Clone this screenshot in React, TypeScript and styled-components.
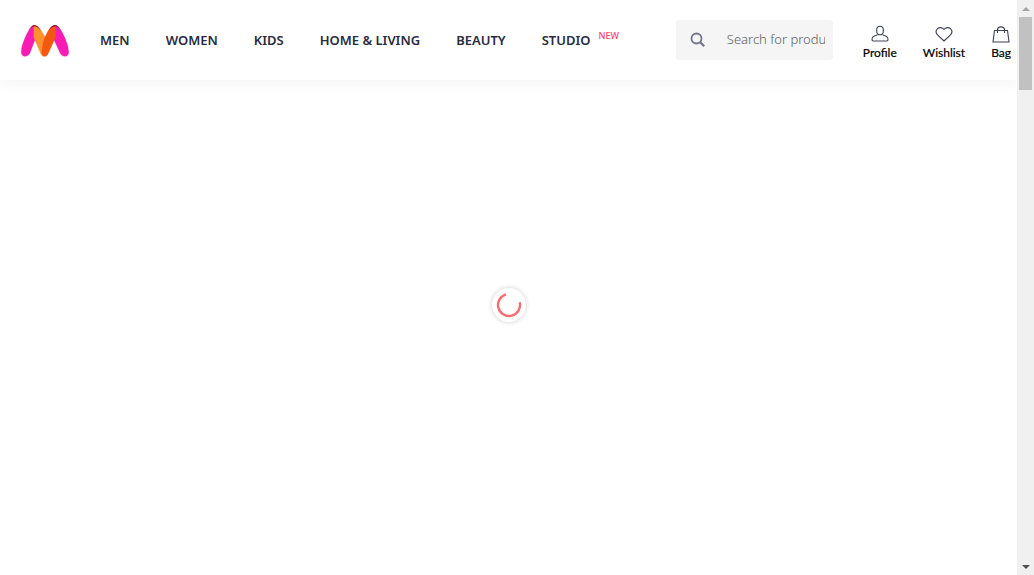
import React from "react";
import styled, { createGlobalStyle, keyframes } from "styled-components";

const GlobalStyle = createGlobalStyle`
  * { box-sizing: border-box; }
  body { margin: 0; background: #fff; color: #282c3f; font-family: "Noto Sans", "Liberation Sans", sans-serif; overflow: hidden; }
`;

const Window = styled.div`
  display: flex;
  height: 100vh;
`;

const Page = styled.div`
  flex: 1;
  min-width: 0;
  display: flex;
  flex-direction: column;
  overflow: hidden;
`;

const Header = styled.header`
  display: flex;
  align-items: center;
  height: 80px;
  flex: none;
  padding: 0 6px 0 20px;
  box-shadow: 0 4px 12px rgba(40, 44, 63, 0.05);
`;

const Logo = styled.a`
  display: block;
  width: 50px;
  height: 36px;
  flex: none;
`;

const Nav = styled.nav`
  display: flex;
  gap: 36px;
  margin-left: 30px;
`;

const NavLink = styled.a`
  color: #282c3f;
  font-size: 13px;
  line-height: 20px;
  font-weight: 600;
  text-decoration: none;
  white-space: nowrap;
`;

const NewTag = styled.sup`
  margin-left: 8px;
  color: #ff3f6c;
  font-size: 9px;
  line-height: 10px;
  font-weight: 500;
  vertical-align: 6px;
`;

const Search = styled.form`
  display: flex;
  align-items: center;
  width: 157px;
  height: 40px;
  margin-left: auto;
  padding: 0 8px 0 13px;
  background: #f5f5f6;
  border-radius: 4px;
`;

const SearchButton = styled.button`
  display: flex;
  flex: none;
  margin: 0 20px 0 0;
  padding: 0;
  border: 0;
  background: none;
`;

const SearchInput = styled.input`
  flex: 1;
  min-width: 0;
  padding: 0 0 2px;
  border: 0;
  outline: 0;
  background: none;
  color: #696e79;
  font-family: inherit;
  font-size: 13px;
  font-weight: 300;
  line-height: 20px;
  &::placeholder { color: #606060; opacity: 1; }
`;

const Actions = styled.div`
  display: flex;
  gap: 26px;
  margin-left: 30px;
`;

const Action = styled.a`
  display: flex;
  flex-direction: column;
  align-items: center;
  gap: 1px;
  padding-top: 7px;
  color: #000;
  font-family: Lato, sans-serif;
  font-size: 12px;
  line-height: 18px;
  text-decoration: none;
  -webkit-text-stroke: 0.2px;
`;

const Content = styled.main`
  flex: 1;
  display: flex;
  justify-content: center;
  padding-top: 208px;
`;

const spin = keyframes`
  to { transform: rotate(360deg); }
`;

const Loader = styled.div`
  display: flex;
  align-items: center;
  justify-content: center;
  width: 34px;
  height: 34px;
  border-radius: 50%;
  background: #fff;
  box-shadow: 0 0 5px rgba(0, 0, 0, 0.2);
  @media (prefers-reduced-motion: no-preference) {
    &:hover svg { animation: ${spin} 1s linear infinite; }
  }
`;

const Scrollbar = styled.div`
  display: flex;
  flex-direction: column;
  align-items: center;
  flex: none;
  width: 17px;
  background: #f0f0f0;
`;

const ScrollArrow = styled.div`
  display: flex;
  height: 17px;
  align-items: center;
`;

const Thumb = styled.div`
  width: 13px;
  height: 73px;
  background: #c1c1c1;
`;

const Track = styled.div`
  flex: 1;
`;

const sections = ["MEN", "WOMEN", "KIDS", "HOME & LIVING", "BEAUTY"];

function LogoMark() {
  return (
    <svg width="50" height="36" viewBox="0 0 50 36" role="img" aria-label="Home">
      <path
        d="M14.500 3C9 5 1 22 1 31c0 5 7 5 9 0l5-13 5.500 13c1.500 4.500 6.500 4.500 8 0L34 18l5 13c2 5 10 5 10 0C49 22 41 5 35 3c-4 0-7 6-10 12-3-6-6-12-10.500-12Z"
        fill="#eee" stroke="#eee" strokeWidth="1.500"
      />
      <path d="M14.500 3C9 4 1.200 22 1.200 30c0 6 7 5.500 9 .5L15 18V4Z" fill="#f81cb5" />
      <path d="M35 3c6 1 13.800 19 13.800 27 0 6-7 5.500-9 .5L34 18V4Z" fill="#f81cb5" />
      <path d="M13.700 3.200c4.500-.5 7.500 5 11.500 12L28 22l-4 12.500c-2-.5-3-2-4-4.500l-6.300-14.500Z" fill="#ff912e" />
      <path d="M35.500 3.200c-4.500-.5-7.500 5-11 12.800-1.200 3.300-2 8-3 15.500 1.500 4 5.500 4 7-.5l7-15.500Z" fill="#f4570e" />
      <path d="M8.500 8.500C11 4.500 12.500 3 14.500 3S19 5 21 9c-2.500-3.300-4.500-4.500-6.500-4.500S11 5.700 8.500 8.500ZM28.500 9C31 4.500 33 3 35 3s4 1.500 6 5.500c-2-2.800-4-4-6-4s-4 1.200-6.500 4.500Z" fill="#9c1544" />
    </svg>
  );
}

export default function App() {
  return (
    <>
      <GlobalStyle />
      <Window>
        <Page>
          <Header>
            <Logo href="#"><LogoMark /></Logo>
            <Nav>
              {sections.map((name) => <NavLink href="#" key={name}>{name}</NavLink>)}
              <NavLink href="#">STUDIO<NewTag>NEW</NewTag></NavLink>
            </Nav>
            <Search onSubmit={(e) => e.preventDefault()}>
              <SearchButton aria-label="Search">
                <svg width="18" height="18" viewBox="0 0 18 18" fill="none" stroke="#73758c" strokeWidth="1.800">
                  <circle cx="7.500" cy="7.500" r="5" />
                  <path d="m11.200 11.200 4 4" strokeWidth="2.200" />
                </svg>
              </SearchButton>
              <SearchInput aria-label="Search for products" placeholder="Search for products, brands and more" />
            </Search>
            <Actions>
              <Action href="#">
                <svg width="18" height="18" viewBox="0 0 18 18" fill="none" stroke="#3e4152" strokeWidth="1.100">
                  <path d="M9 1.200c-2.200 0-3.300 1.300-3.300 3.500v1.500C5.700 8.400 7 9.800 9 9.800s3.300-1.400 3.300-3.600V4.700c0-2.200-1.100-3.500-3.300-3.500ZM6.300 10C3 10.700 1 12 1 14.500c0 1 .3 1.500 1.300 1.500h13.400c1 0 1.300-.5 1.300-1.500 0-2.500-2-3.800-5.300-4.500" />
                </svg>
                Profile
              </Action>
              <Action href="#">
                <svg width="18" height="18" viewBox="0 0 18 18" fill="none" stroke="#3e4152" strokeWidth="1.100" strokeLinejoin="round">
                  <path d="M9 4.500C7.500 2.300 4.500 2 2.500 3.700c-1.900 2-1.600 4.500 0 6.200L9 16l6.500-6.100c1.600-1.700 1.900-4.200 0-6.200-2-1.700-5-1.400-6.500.8Z" />
                </svg>
                Wishlist
              </Action>
              <Action href="#">
                <svg width="18" height="18" viewBox="0 0 18 18" fill="none" stroke="#3e4152" strokeWidth="1.100">
                  <path d="M2.500 5.500h13L17 17H1ZM5.500 8V5C5.500 3 6.800 1.900 9 1.900S12.500 3 12.500 5v3" />
                </svg>
                Bag
              </Action>
            </Actions>
          </Header>
          <Content>
            <Loader role="status" aria-label="Loading">
              <svg width="26" height="26" viewBox="0 0 26 26" fill="none">
                <path d="M10 2.400A11 11 0 1 0 23.700 10.300" stroke="#f86c70" strokeWidth="2.400" />
              </svg>
            </Loader>
          </Content>
        </Page>
        <Scrollbar aria-hidden="true">
          <ScrollArrow><svg width="8" height="4" viewBox="0 0 8 4"><path d="m0 4 4-4 4 4Z" fill="#a3a3a3" /></svg></ScrollArrow>
          <Thumb />
          <Track />
          <ScrollArrow><svg width="8" height="4" viewBox="0 0 8 4"><path d="m0 0 4 4 4-4Z" fill="#505050" /></svg></ScrollArrow>
        </Scrollbar>
      </Window>
    </>
  );
}
